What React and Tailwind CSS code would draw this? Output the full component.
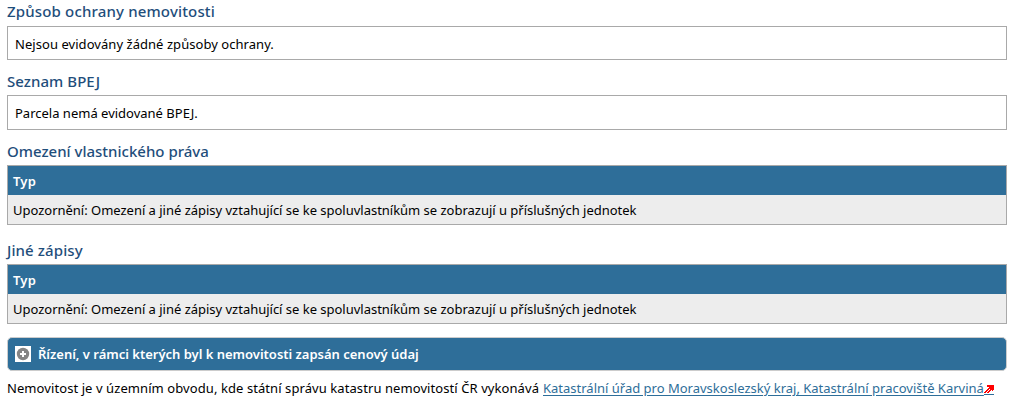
function Heading({ children, className }) {
  return (
    <h3 className={`flex items-center whitespace-nowrap text-[15px] font-medium text-[#1f4e7b] ${className}`}>
      {children}
    </h3>
  );
}

function Box({ children, className }) {
  return (
    <div className={`flex items-center border border-[#a9a9a9] bg-white px-[7px] ${className}`}>
      {children}
    </div>
  );
}

function TypeTable() {
  return (
    <div className="h-[60px] border border-[#a9a9a9] bg-[#ededed]">
      <div className="flex h-[29px] items-center bg-[#2e6e99] px-[5px] pt-px text-[13px] font-semibold tracking-[0.2px] text-white">
        <span>Typ</span>
      </div>
      <div className="flex h-[29px] items-center px-[5px] pt-px tracking-[-0.015px]">
        <span>Upozornění: Omezení a jiné zápisy vztahující se ke spoluvlastníkům se zobrazují u příslušných jednotek</span>
      </div>
    </div>
  );
}

export default function App() {
  return (
    <main className="h-[403px] w-[1014px] overflow-hidden whitespace-nowrap bg-white pl-[7px] pr-[7px] font-['Noto_Sans','Open_Sans',sans-serif] text-[13px] leading-[18px] text-black">
      <Heading className="h-[26px] pb-[4px]">
        <span className="tracking-[0.16px]">Způsob ochrany nemovitosti</span>
      </Heading>
      <Box className="h-[34px] pt-[2px] tracking-[0.05px]">
        <span>Nejsou evidovány žádné způsoby ochrany.</span>
      </Box>
      <Heading className="h-[35px] pt-[6px]">
        <span className="tracking-[0.05px]">Seznam BPEJ</span>
      </Heading>
      <Box className="h-[35px] pt-px">
        <span>Parcela nemá evidované BPEJ.</span>
      </Box>
      <Heading className="h-[35px] pt-[6px]">
        <span>Omezení vlastnického práva</span>
      </Heading>
      <TypeTable />
      <Heading className="h-[39px] pt-[11px]">
        <span className="tracking-[0.1px]">Jiné zápisy</span>
      </Heading>
      <TypeTable />
      <div className="mt-[13px] flex h-[34px] items-center rounded-[5px] border border-[#cccccc] bg-[#2e6e99] pl-[7px] text-[13px] font-semibold text-white">
        <svg className="mr-[7px] h-4 w-4 shrink-0" viewBox="0 0 16 16">
          <path fill="#fff" d="M0 0h16v16H0z" />
          <circle cx="8" cy="8" r="6.2" fill="#858585" />
          <path fill="#fff" d="M7 5h2v2h2v2H9v2H7V9H5V7h2z" />
        </svg>
        <span className="tracking-[-0.01px]">Řízení, v rámci kterých byl k nemovitosti zapsán cenový údaj</span>
      </div>
      <p className="flex pt-[8px]">
        <span className="mr-[3px] w-[533px] tracking-[0.08px]">Nemovitost je v územním obvodu, kde státní správu katastru nemovitostí ČR vykonává</span>
        <a href="#" className="flex text-[#2e6e99]">
          <span className="w-[441px] underline underline-offset-2">Katastrální úřad pro Moravskoslezský kraj, Katastrální pracoviště Karviná</span>
          <svg className="h-[18px] w-[10px]" viewBox="0 0 10 18" shapeRendering="crispEdges">
            <path d="M0 15.5h10" stroke="#2e6e99" />
            <path fill="#f00" d="M3 6h7v5H9v1H8v-1H7v1H6v1H5v1H0v-1h1v-1h1v-1h1v-1h1V9h1V8H3z" />
            <path fill="#fff" d="M2 13h1v1H2zM3 12h1v1H3zM4 11h1v1H4zM5 10h1v1H5z" />
          </svg>
        </a>
      </p>
    </main>
  );
}
